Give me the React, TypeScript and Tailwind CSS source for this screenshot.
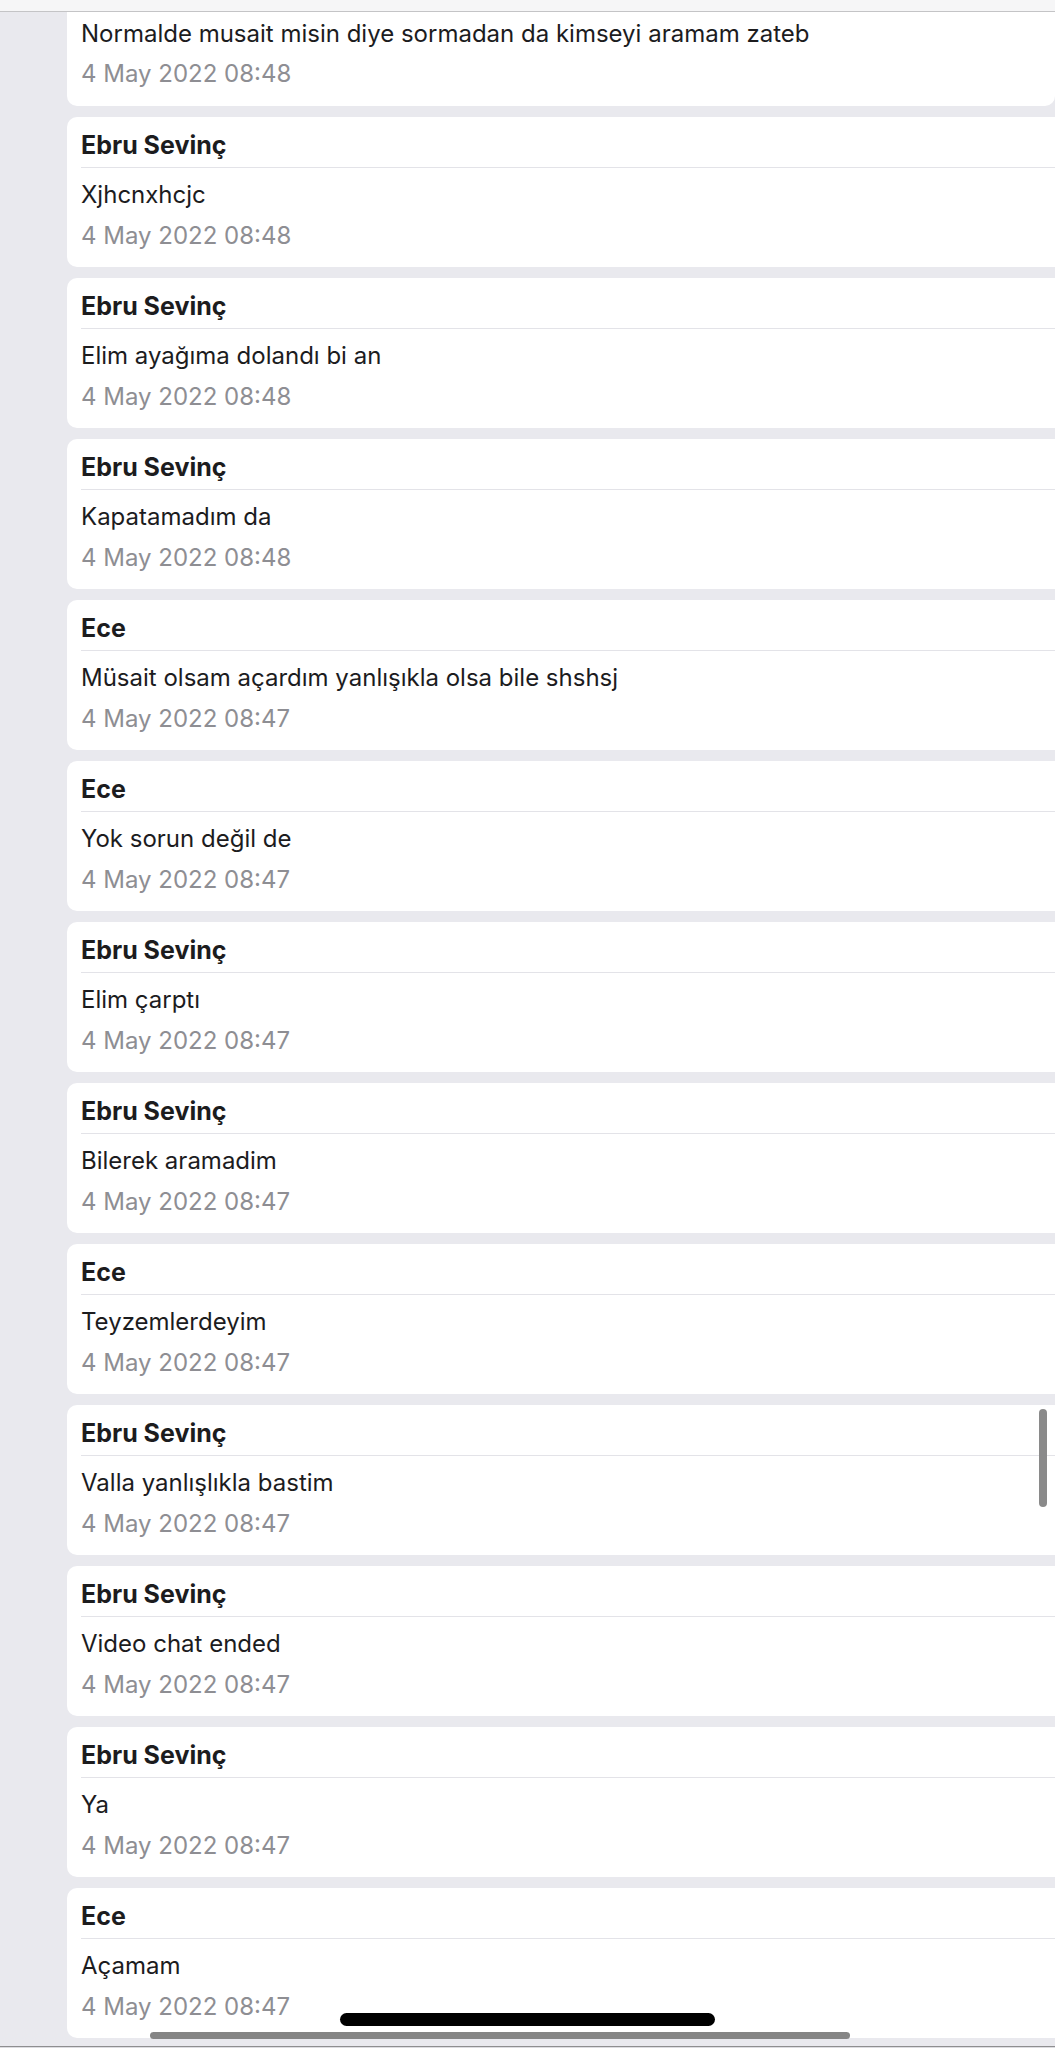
import React from 'react';

const messages = [
  { id: 1, sender: 'Ebru Sevinç', text: 'Xjhcnxhcjc', time: '4 May 2022 08:48' },
  { id: 2, sender: 'Ebru Sevinç', text: 'Elim ayağıma dolandı bi an', time: '4 May 2022 08:48' },
  { id: 3, sender: 'Ebru Sevinç', text: 'Kapatamadım da', time: '4 May 2022 08:48' },
  { id: 4, sender: 'Ece', text: 'Müsait olsam açardım yanlışıkla olsa bile shshsj', time: '4 May 2022 08:47' },
  { id: 5, sender: 'Ece', text: 'Yok sorun değil de', time: '4 May 2022 08:47' },
  { id: 6, sender: 'Ebru Sevinç', text: 'Elim çarptı', time: '4 May 2022 08:47' },
  { id: 7, sender: 'Ebru Sevinç', text: 'Bilerek aramadim', time: '4 May 2022 08:47' },
  { id: 8, sender: 'Ece', text: 'Teyzemlerdeyim', time: '4 May 2022 08:47' },
  { id: 9, sender: 'Ebru Sevinç', text: 'Valla yanlışlıkla bastim', time: '4 May 2022 08:47' },
  { id: 10, sender: 'Ebru Sevinç', text: 'Video chat ended', time: '4 May 2022 08:47' },
  { id: 11, sender: 'Ebru Sevinç', text: 'Ya', time: '4 May 2022 08:47' },
  { id: 12, sender: 'Ece', text: 'Açamam', time: '4 May 2022 08:47' },
];

const App: React.FC = () => {
  return (
    <div
      className="relative flex h-[2048px] w-[1055px] flex-col overflow-hidden bg-[#e9e9ee] text-[#1c1c1e]"
      style={{ fontFamily: 'Inter, "Noto Sans", sans-serif' }}
    >
      {/* top bar */}
      <div className="h-[12px] shrink-0 border-b border-[#c4c4c6] bg-[#f6f6f7]" />

      <div className="flex flex-col gap-[11px] pl-[67px]">
        {/* partially scrolled-off message */}
        <div className="h-[94px] rounded-b-[10px] bg-white pl-[14px] pt-[4px]">
          <div className="text-[24px] leading-[36px]">Normalde musait misin diye sormadan da kimseyi aramam zateb</div>
          <div className="mt-[4px] text-[24px] leading-[36px] text-[#8e8e93]">4 May 2022 08:48</div>
        </div>

        {messages.map((m) => (
          <div key={m.id} className="h-[150px] rounded-l-[10px] bg-white pl-[14px]">
            <div className="h-[51px] border-b border-[#e3e3e8] pt-[5px] text-[25px] font-bold leading-[46px]">
              {m.sender}
            </div>
            <div className="mt-[9px] text-[24px] leading-[36px]">{m.text}</div>
            <div className="mt-[5px] text-[24px] leading-[36px] text-[#8e8e93]">{m.time}</div>
          </div>
        ))}
      </div>

      <div className="flex-1" />
      <div className="h-[1px] shrink-0 bg-[#8e8e90]" />
      <div className="h-[1px] shrink-0 bg-[#dcdce0]" />

      {/* vertical scroll indicator */}
      <div className="absolute left-[1039px] top-[1409px] h-[98px] w-[8px] rounded-full bg-[#8a8a8a]" />
      {/* home indicator */}
      <div className="absolute left-[340px] top-[2013px] h-[13px] w-[375px] rounded-full bg-black" />
      {/* horizontal scroll indicator */}
      <div className="absolute left-[150px] top-[2032px] h-[7px] w-[700px] rounded-full bg-[#858585]" />
    </div>
  );
};

export default App;
